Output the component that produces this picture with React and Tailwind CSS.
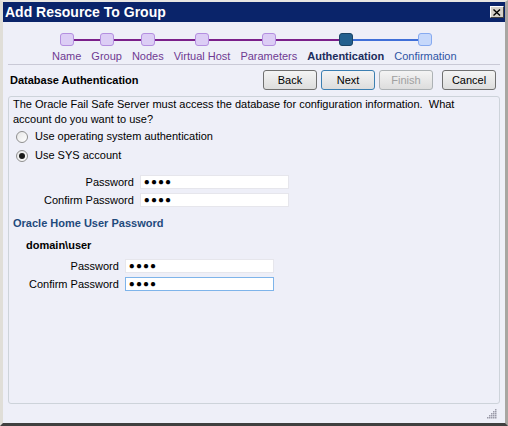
import React from 'react';

const steps = [
  { name: 'Name', state: 'done' },
  { name: 'Group', state: 'done' },
  { name: 'Nodes', state: 'done' },
  { name: 'Virtual Host', state: 'done' },
  { name: 'Parameters', state: 'done' },
  { name: 'Authentication', state: 'current' },
  { name: 'Confirmation', state: 'next' },
];

function StepTrain() {
  return (
    <div className="flex pl-[44px] pt-[11px]">
      {steps.map((s, i) => {
        const leftColor = i === 0 ? 'bg-transparent' : s.state === 'next' ? 'bg-[#3f6fd8]' : 'bg-[#7a1f8a]';
        const rightColor =
          i === steps.length - 1 ? 'bg-transparent' : s.state === 'done' ? 'bg-[#7a1f8a]' : 'bg-[#3f6fd8]';
        const dot =
          s.state === 'done'
            ? 'bg-[#dccdf5] border-[#b48fe0]'
            : s.state === 'current'
            ? 'bg-[#23608f] border-[#1a4466]'
            : 'bg-[#c6d8fb] border-[#86aaf0]';
        const label =
          s.state === 'done'
            ? 'text-[#6e3a92]'
            : s.state === 'current'
            ? 'text-[#1b2c5c] font-bold'
            : 'text-[#2f55a5]';
        return (
          <div key={s.name} className="flex flex-col items-stretch">
            <div className="flex items-center h-[13px]">
              <div className={`flex-1 h-[2px] ${leftColor}`} />
              <div className={`w-[14px] h-[13px] rounded-[3px] border ${dot}`} />
              <div className={`flex-1 h-[2px] ${rightColor}`} />
            </div>
            <div className={`mt-[3px] px-[5px] text-[11px] leading-[15px] whitespace-nowrap ${label}`}>{s.name}</div>
          </div>
        );
      })}
    </div>
  );
}

function Btn({ children, variant }) {
  const cls =
    variant === 'focus'
      ? 'border-[#3c7fb1] text-black'
      : variant === 'disabled'
      ? 'border-[#adb2b5] text-[#a0a0a0]'
      : 'border-[#707070] text-black';
  return (
    <button
      className={`w-[54px] h-[20px] rounded-[3px] border bg-gradient-to-b from-[#f4f4f4] to-[#dddddd] text-[11px] leading-none ${cls}`}
    >
      {children}
    </button>
  );
}

function Radio({ checked, label }) {
  return (
    <div className="flex items-center h-[19px] pl-[3px]">
      <span className="w-[12px] h-[12px] rounded-full border border-[#8f8f8f] bg-gradient-to-br from-[#e6e6e6] to-white flex items-center justify-center">
        {checked && <span className="w-[6px] h-[6px] rounded-full bg-[#1a1a1a]" />}
      </span>
      <span className="ml-[7px]">{label}</span>
    </div>
  );
}

function PwdField({ label, focus }) {
  return (
    <>
      <span className="text-right leading-[14px]">{label}</span>
      <div
        className={`w-[149px] h-[14px] bg-white border ${focus ? 'border-[#7eb4ea]' : 'border-[#e6e6ec]'} flex items-center pl-[3px] text-[10px] tracking-[1px] leading-none`}
      >
        ●●●●
      </div>
    </>
  );
}

export default function App() {
  return (
    <div
      className="w-[508px] h-[426px] flex flex-col bg-[#d4d0c8] border-t-[2px] border-l-[3px] border-r-[3px] border-b-[3px] border-t-[#e8e6e2] border-l-[#e0ded8] border-r-[#a8a6a2] border-b-[#404040] text-black"
      style={{ fontFamily: '"Liberation Sans", Arial, sans-serif' }}
    >
      {/* title bar */}
      <div className="h-[20px] bg-[#0a246a] flex items-center justify-between pl-[2px] pr-[1px]">
        <span className="text-white font-bold text-[14px] leading-none">Add Resource To Group</span>
        <div className="w-[14px] h-[12px] bg-[#d4d0c8] border-t border-l border-t-white border-l-white border-b border-r border-b-[#404040] border-r-[#404040] flex items-center justify-center">
          <svg width="8" height="7" viewBox="0 0 8 7">
            <path d="M0.5 0.5 L7 6.5 M7 0.5 L0.5 6.5" stroke="#000" strokeWidth="1.4" />
          </svg>
        </div>
      </div>

      <div className="flex-1 flex flex-col bg-[#eeeff8] text-[11px]">
        <StepTrain />
        <div className="mx-[5px] h-px bg-[#c9c9d6]" />

        <div className="flex items-center mt-[5px] h-[20px] pl-[7px] pr-[9px]">
          <span className="font-bold flex-1">Database Authentication</span>
          <div className="flex gap-[4px]">
            <Btn>Back</Btn>
            <Btn variant="focus">Next</Btn>
            <Btn variant="disabled">Finish</Btn>
          </div>
          <div className="ml-[9px]">
            <Btn>Cancel</Btn>
          </div>
        </div>

        <div className="mx-[5px] mt-[6px] h-[308px] border border-[#cdd3da] rounded-[3px] px-[4px] leading-[15px]">
          <p>
            The Oracle Fail Safe Server must access the database for configuration information.&nbsp; What
            <br />
            account do you want to use?
          </p>
          <Radio label="Use operating system authentication" />
          <Radio checked label="Use SYS account" />

          <div className="grid grid-cols-[auto_auto] justify-start gap-x-[6px] gap-y-[4px] mt-[10px] pl-[31px]">
            <PwdField label="Password" />
            <PwdField label="Confirm Password" />
          </div>

          <div className="mt-[9px] font-bold text-[#1f4a7c]">Oracle Home User Password</div>
          <div className="mt-[7px] pl-[13px] font-bold">domain\user</div>
          <div className="grid grid-cols-[auto_auto] justify-start gap-x-[6px] gap-y-[4px] mt-[6px] pl-[16px]">
            <PwdField label="Password" />
            <PwdField label="Confirm Password" focus />
          </div>
        </div>

        <div className="flex-1 flex justify-end items-center pr-[8px]">
          <svg width="10" height="10" viewBox="0 0 10 10">
            {[
              [8, 0],
              [6, 2], [8, 2],
              [4, 4], [6, 4], [8, 4],
              [2, 6], [4, 6], [6, 6], [8, 6],
              [0, 8], [2, 8], [4, 8], [6, 8], [8, 8],
            ].map(([x, y]) => (
              <rect key={`${x}-${y}`} x={x} y={y} width="1.5" height="1.5" fill="#9a9aa8" />
            ))}
          </svg>
        </div>
      </div>
    </div>
  );
}
